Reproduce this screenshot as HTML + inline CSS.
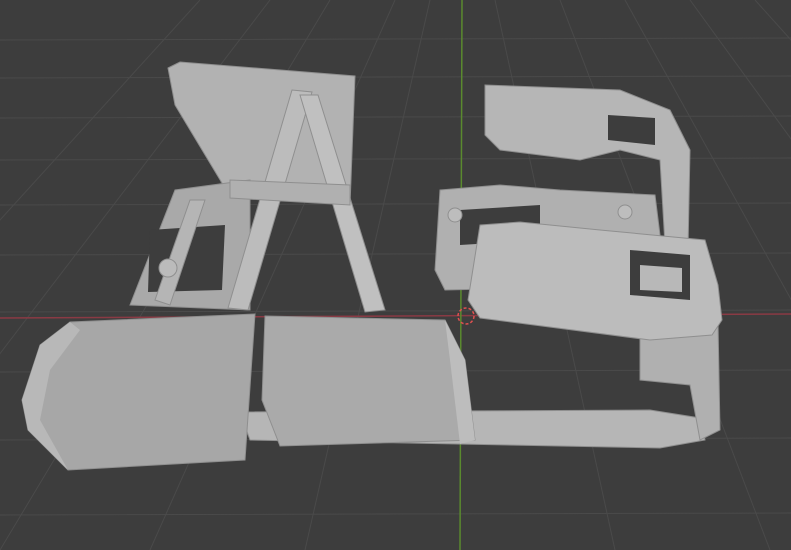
<!DOCTYPE html>
<html><head><meta charset="utf-8"><style>
html,body{margin:0;padding:0;background:#3d3d3d;width:791px;height:550px;overflow:hidden}
svg{display:block}
</style></head><body>
<svg width="791" height="550" viewBox="0 0 791 550" xmlns="http://www.w3.org/2000/svg">
<rect width="791" height="550" fill="#3d3d3d"/>
<g stroke="#4a4a4a" stroke-width="1" fill="none">
<path d="M0,40 L791,38 M0,78 L791,76 M0,118 L791,116 M0,160 L791,158 M0,205 L791,203 M0,255 L791,253 M0,312 L791,310 M0,372 L791,370 M0,440 L791,438 M0,515 L791,513"/>
<path d="M-300,550 L200,0 M-150,550 L270,0 M0,550 L330,0 M150,550 L395,0 M305,550 L430,0 M615,550 L495,0 M770,550 L560,0 M930,550 L625,0 M1090,550 L690,0 M1250,550 L755,0"/>
</g>
<line x1="0" y1="318" x2="791" y2="314" stroke="#8a3a44" stroke-width="1.5"/>
<line x1="462" y1="0" x2="460" y2="550" stroke="#5a8a2e" stroke-width="1.5"/>
<g stroke="#8f8f8f" stroke-width="1">
<!-- back plate -->
<polygon points="168,68 180,62 355,76 350,205 225,188 175,105" fill="#b2b2b2"/>
<!-- left frame -->
<polygon points="130,305 175,190 250,180 250,310" fill="#a9a9a9"/>
<polygon points="150,230 225,225 222,290 148,292" fill="#3d3d3d" stroke="none"/>
<polygon points="155,300 190,200 205,200 170,305" fill="#b5b5b5"/>
<circle cx="168" cy="268" r="9" fill="#bbbbbb"/>
<!-- A frame -->
<polygon points="292,90 312,92 248,310 228,308" fill="#bcbcbc"/>
<polygon points="300,95 318,95 385,310 365,312" fill="#c0c0c0"/>
<polygon points="230,180 350,185 350,205 230,198" fill="#b0b0b0"/>
<!-- bottom rail -->
<polygon points="240,412 650,410 700,418 705,440 660,448 250,440" fill="#b6b6b6"/>
<!-- right frame -->
<polygon points="640,320 718,322 720,430 700,440 690,385 640,380" fill="#b0b0b0"/>
<!-- right middle frame -->
<polygon points="440,190 500,185 560,190 655,195 660,235 650,285 445,290 435,270" fill="#b0b0b0"/>
<polygon points="460,210 540,205 540,240 460,245" fill="#3d3d3d" stroke="none"/>
<circle cx="455" cy="215" r="7" fill="#bdbdbd"/>
<circle cx="625" cy="212" r="7" fill="#bdbdbd"/>
<!-- right top part -->
<polygon points="485,85 620,90 670,110 690,150 688,250 665,245 660,160 620,150 580,160 500,150 485,135" fill="#b6b6b6"/>
<polygon points="608,115 655,118 655,145 608,140" fill="#3d3d3d" stroke="none"/>
<!-- right lower part -->
<polygon points="480,225 520,222 600,230 705,240 718,285 722,320 712,335 650,340 480,318 468,300" fill="#bcbcbc"/>
<polygon points="630,250 690,255 690,300 630,295" fill="#3d3d3d" stroke="none"/>
<polygon points="640,265 682,268 682,292 640,290" fill="#b8b8b8" stroke="none"/>
<!-- left bucket -->
<polygon points="22,400 40,345 70,322 255,314 245,460 68,470 28,430" fill="#a7a7a7"/>
<polygon points="22,400 40,345 70,322 80,330 50,370 40,420 68,470 28,430" fill="#b8b8b8" stroke="none"/>
<!-- middle bucket -->
<polygon points="265,316 445,320 465,360 475,440 280,446 262,400" fill="#aaaaaa"/>
<polygon points="445,320 465,360 475,440 460,444 450,360" fill="#bdbdbd" stroke="none"/>
</g>
<circle cx="466" cy="316" r="8" fill="none" stroke="#e05050" stroke-width="1.5" stroke-dasharray="3,2"/>
</svg>
</body></html>
